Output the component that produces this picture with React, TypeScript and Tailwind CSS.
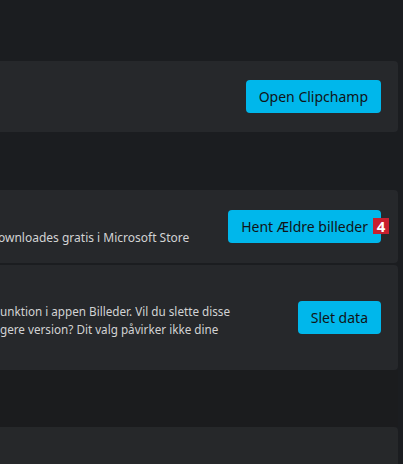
import React from "react";

const font = { fontFamily: '"Noto Sans", "Open Sans", sans-serif' };

function Btn({ children }: { children: React.ReactNode }) {
  return (
    <button className="h-[33px] rounded-[4px] bg-[#00b7eb] px-[13px] text-[14px] leading-none text-[#111417]">
      {children}
    </button>
  );
}

export default function App() {
  return (
    <div className="h-[464px] w-[403px] overflow-hidden bg-[#1b1d20]" style={font}>
      <div className="flex w-[398px] flex-col">
        <div className="h-[61px]" />
        <div className="flex h-[71px] items-center justify-end rounded-r-[4px] bg-[#26282b] pr-[17px]">
          <Btn>Open Clipchamp</Btn>
        </div>
        <div className="h-[58px]" />
        <div className="flex h-[73px] items-center justify-between rounded-r-[4px] bg-[#26282b] pr-[17px]">
          <div className="ml-[-2px] mt-[23px] text-[12px] text-[#d2d3d4]">ownloades gratis i Microsoft Store</div>
          <div className="relative">
            <Btn>Hent Ældre billeder</Btn>
            <span className="absolute right-[-8px] top-[8px] flex h-[16px] w-[16px] items-center justify-center bg-[#c8202f] text-[15px] font-bold leading-none text-white">
              4
            </span>
          </div>
        </div>
        <div className="h-[2px]" />
        <div className="flex h-[105px] items-center justify-between rounded-r-[4px] bg-[#26282b] pr-[17px]">
          <div className="mt-[6px] text-[11.7px] leading-[17.5px] text-[#d2d3d4]">
            <div>unktion i appen Billeder. Vil du slette disse</div>
            <div>gere version? Dit valg påvirker ikke dine</div>
          </div>
          <Btn>Slet data</Btn>
        </div>
        <div className="h-[57px] bg-[#1b1c1e]" />
        <div className="h-[37px] rounded-tr-[4px] bg-[#26282a]" />
      </div>
    </div>
  );
}
